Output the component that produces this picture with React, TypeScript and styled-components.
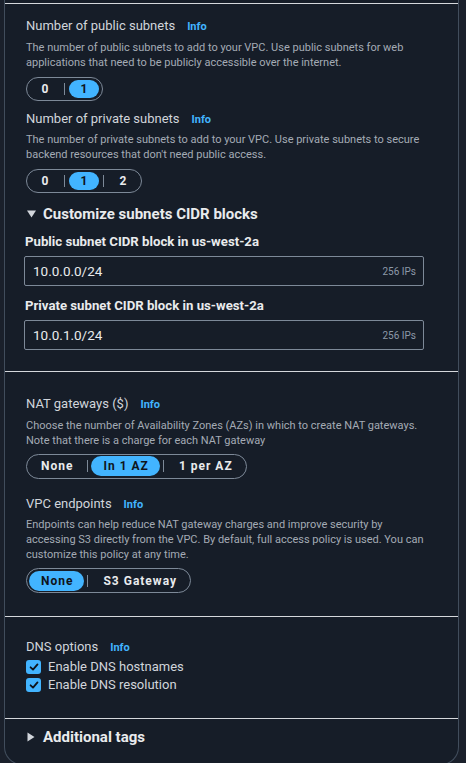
import React from "react";
import styled, { createGlobalStyle } from "styled-components";

const GlobalStyle = createGlobalStyle`
  html, body {
    margin: 0;
    padding: 0;
    background: #1a202b;
  }
  body {
    font-family: Roboto, "Open Sans", sans-serif;
    color: #d1d5db;
    -webkit-font-smoothing: antialiased;
  }
`;

interface SegOption {
  label: string;
  selected?: boolean;
}

interface FieldProps {
  title: string;
  description: string;
  options: SegOption[];
  wide?: boolean;
  after?: number;
  segGap?: number;
  descWidth?: number;
}

function SegmentedField({
  title,
  description,
  options,
  wide = false,
  after = 0,
  segGap = 7,
  descWidth = 410,
}: FieldProps) {
  return (
    <Field $after={after}>
      <FieldTitle>
        {title}
        <InfoLink>Info</InfoLink>
      </FieldTitle>
      <Description $width={descWidth}>{description}</Description>
      <Segmented $wide={wide} $gap={segGap}>
        {options.map((o, i) => (
          <React.Fragment key={o.label}>
            {i > 0 && <SegDivider $wide={wide} />}
            <SegButton $selected={!!o.selected} $wide={wide}>
              {o.label}
            </SegButton>
          </React.Fragment>
        ))}
      </Segmented>
    </Field>
  );
}

function CidrInput({ label, value, top }: { label: string; value: string; top: number }) {
  return (
    <CidrField $top={top}>
      <CidrLabel>{label}</CidrLabel>
      <InputBox>
        <InputValue>{value}</InputValue>
        <InputHint>256 IPs</InputHint>
      </InputBox>
    </CidrField>
  );
}

function Check({ label }: { label: string }) {
  return (
    <CheckRow>
      <CheckBox>
        <svg width="10" height="10" viewBox="0 0 10 10">
          <path
            d="M1.6 5.3 L4 7.6 L8.5 2.4"
            fill="none"
            stroke="#0f141a"
            strokeWidth="1.8"
            strokeLinecap="round"
            strokeLinejoin="round"
          />
        </svg>
      </CheckBox>
      {label}
    </CheckRow>
  );
}

export default function App() {
  return (
    <>
      <GlobalStyle />
      <Page>
        <Panel>
          <Section $top={12} $bottom={21}>
            <SegmentedField
              title="Number of public subnets"
              description="The number of public subnets to add to your VPC. Use public subnets for web applications that need to be publicly accessible over the internet."
              options={[{ label: "0" }, { label: "1", selected: true }]}
              after={8}
            />
            <SegmentedField
              title="Number of private subnets"
              description="The number of private subnets to add to your VPC. Use private subnets to secure backend resources that don't need public access."
              options={[{ label: "0" }, { label: "1", selected: true }, { label: "2" }]}
              after={11}
            />
            <Expander>
              <Caret>
                <svg width="9" height="8" viewBox="0 0 9 8">
                  <path d="M0 0.5 H9 L4.5 7.5 Z" fill="#d1d5db" />
                </svg>
              </Caret>
              Customize subnets CIDR blocks
            </Expander>
            <CidrInput top={9} label="Public subnet CIDR block in us-west-2a" value="10.0.0.0/24" />
            <CidrInput top={11} label="Private subnet CIDR block in us-west-2a" value="10.0.1.0/24" />
          </Section>
          <Section $top={22} $bottom={23}>
            <SegmentedField
              wide
              title="NAT gateways ($)"
              description="Choose the number of Availability Zones (AZs) in which to create NAT gateways. Note that there is a charge for each NAT gateway"
              options={[{ label: "None" }, { label: "In 1 AZ", selected: true }, { label: "1 per AZ" }]}
              after={15}
              segGap={6}
            />
            <SegmentedField
              wide
              title="VPC endpoints"
              description="Endpoints can help reduce NAT gateway charges and improve security by accessing S3 directly from the VPC. By default, full access policy is used. You can customize this policy at any time."
              options={[{ label: "None", selected: true }, { label: "S3 Gateway" }]}
              segGap={6}
              descWidth={404}
            />
          </Section>
          <Section $top={20} $bottom={26}>
            <FieldTitle>
              DNS options
              <InfoLink>Info</InfoLink>
            </FieldTitle>
            <Checks>
              <Check label="Enable DNS hostnames" />
              <Check label="Enable DNS resolution" />
            </Checks>
          </Section>
          <Section $top={8} $bottom={0}>
            <Expander>
              <Caret>
                <svg width="8" height="10" viewBox="0 0 8 10">
                  <path d="M0.5 0.5 V9.5 L7.5 5 Z" fill="#d1d5db" />
                </svg>
              </Caret>
              Additional tags
            </Expander>
          </Section>
        </Panel>
      </Page>
    </>
  );
}

const Page = styled.div`
  width: 466px;
  height: 763px;
  overflow: hidden;
  background: #1a202b;
`;

const Panel = styled.div`
  width: 455px;
  height: 765px;
  margin-left: 4px;
  padding-top: 3px;
  box-sizing: border-box;
  border: 1px solid #414d5c;
  border-top: none;
  border-radius: 0 0 18px 18px;
  background: #161d28;
`;

const Section = styled.div<{ $top: number; $bottom: number }>`
  border-top: 1px solid #d5d8dc;
  padding: ${(p) => p.$top}px 20px ${(p) => p.$bottom}px 21px;
`;

const Field = styled.div<{ $after: number }>`
  display: flex;
  flex-direction: column;
  margin-bottom: ${(p) => p.$after}px;
`;

const FieldTitle = styled.div`
  display: flex;
  align-items: baseline;
  height: 20px;
  font-size: 13px;
  line-height: 20px;
  color: #d1d5db;
`;

const InfoLink = styled.span`
  margin-left: 12px;
  font-size: 11px;
  line-height: 20px;
  font-weight: 700;
  color: #42b4ff;
`;

const Description = styled.div<{ $width: number }>`
  max-width: ${(p) => p.$width}px;
  margin-top: 3.5px;
  font-size: 11px;
  line-height: 15px;
  color: #a4abb5;
`;

const Segmented = styled.div<{ $wide: boolean; $gap: number }>`
  align-self: flex-start;
  display: flex;
  align-items: center;
  flex-shrink: 0;
  margin-top: ${(p) => p.$gap}px;
  height: ${(p) => (p.$wide ? 25 : 24)}px;
  padding: 0 ${(p) => (p.$wide ? 2 : 3)}px;
  box-sizing: border-box;
  border: 1px solid #7d8998;
  border-radius: 13px;
`;

const SegDivider = styled.span<{ $wide: boolean }>`
  flex-shrink: 0;
  width: 1px;
  height: 12px;
  margin: 0 ${(p) => (p.$wide ? 3 : 4)}px;
  background: #7d8998;
`;

const SegButton = styled.span<{ $selected: boolean; $wide: boolean }>`
  display: flex;
  align-items: center;
  justify-content: center;
  flex-shrink: 0;
  box-sizing: border-box;
  height: ${(p) => (p.$wide ? 20 : 18)}px;
  width: ${(p) => (p.$wide ? "auto" : "30px")};
  padding: 0 ${(p) => (p.$wide ? "11px 0 12px" : "0")};
  border-radius: 10px;
  font-size: 12px;
  font-weight: 700;
  letter-spacing: ${(p) => (p.$wide ? "1px" : "0")};
  background: ${(p) => (p.$selected ? "#42b4ff" : "transparent")};
  color: ${(p) => (p.$selected ? "#0f141a" : "#e9ebed")};
`;

const Expander = styled.div`
  display: flex;
  align-items: center;
  height: 20px;
  font-size: 15px;
  line-height: 20px;
  font-weight: 700;
  color: #e9ebed;
`;

const Caret = styled.span`
  display: inline-flex;
  align-items: center;
  width: 16px;
  margin-left: 1px;
`;

const CidrField = styled.div<{ $top: number }>`
  display: flex;
  flex-direction: column;
  margin-top: ${(p) => p.$top}px;
`;

const CidrLabel = styled.div`
  height: 18px;
  margin-left: -1px;
  margin-bottom: 5px;
  font-size: 13.2px;
  line-height: 18px;
  font-weight: 700;
  color: #e9ebed;
`;

const InputBox = styled.div`
  display: flex;
  align-items: center;
  justify-content: space-between;
  width: 400px;
  height: 30px;
  margin-left: -2px;
  padding: 0 7px 0 8px;
  box-sizing: border-box;
  border: 1px solid #7d8998;
  border-radius: 2px;
`;

const InputValue = styled.span`
  font-size: 13.5px;
  color: #e9ebed;
`;

const InputHint = styled.span`
  font-size: 10px;
  color: #8d99a8;
`;

const Checks = styled.div`
  display: flex;
  flex-direction: column;
  gap: 4px;
  margin-top: 3px;
`;

const CheckRow = styled.div`
  display: flex;
  align-items: center;
  height: 14px;
  font-size: 13px;
  line-height: 14px;
  color: #d1d5db;
`;

const CheckBox = styled.span`
  display: inline-flex;
  align-items: center;
  justify-content: center;
  width: 15px;
  height: 14px;
  margin-right: 7px;
  border-radius: 3px;
  background: #42b4ff;
`;
